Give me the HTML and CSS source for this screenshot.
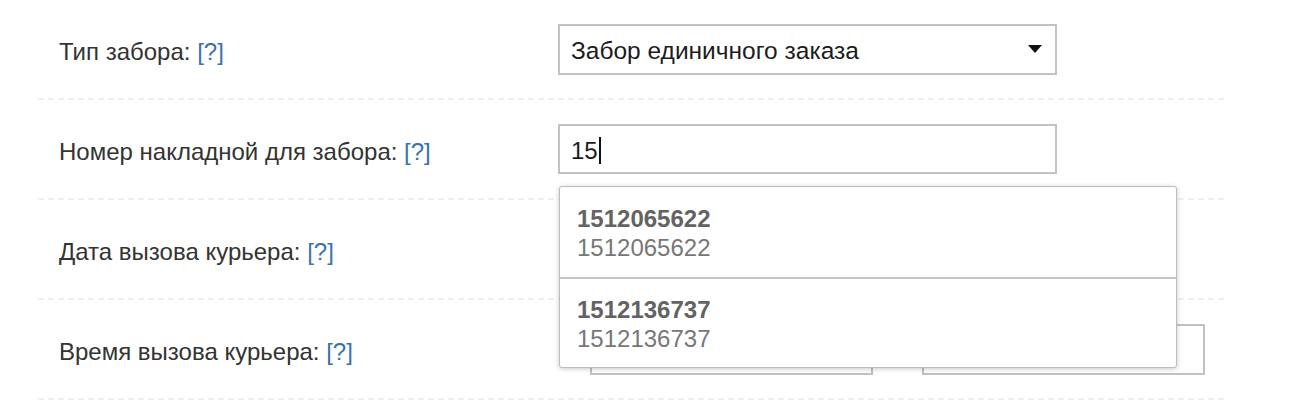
FILE: index.html
```html
<!DOCTYPE html>
<html lang="ru">
<head>
<meta charset="utf-8">
<title>Забор</title>
<link rel="stylesheet" href="styles.css">
</head>
<body>
<div class="form">
  <div class="row">
    <div class="label">Тип забора: <a class="help" href="#">[?]</a></div>
    <div class="field">
      <div class="select"><span class="value">Забор единичного заказа</span><span class="arrow"></span></div>
    </div>
  </div>
  <div class="row">
    <div class="label">Номер накладной для забора: <a class="help" href="#">[?]</a></div>
    <div class="field">
      <div class="input"><span class="value">15</span><span class="caret"></span></div>
      <div class="suggest">
        <div class="item">
          <div class="item-title">1512065622</div>
          <div class="item-sub">1512065622</div>
        </div>
        <div class="item">
          <div class="item-title">1512136737</div>
          <div class="item-sub">1512136737</div>
        </div>
      </div>
    </div>
  </div>
  <div class="row">
    <div class="label">Дата вызова курьера: <a class="help" href="#">[?]</a></div>
    <div class="field"></div>
  </div>
  <div class="row">
    <div class="label">Время вызова курьера: <a class="help" href="#">[?]</a></div>
    <div class="field time">
      <div class="input small"></div>
      <div class="input small"></div>
    </div>
  </div>
</div>
</body>
</html>
```

FILE: styles.css
```css
html, body {
  margin: 0;
  padding: 0;
  background: #fff;
}
body {
  font-family: "Liberation Sans", Arial, sans-serif;
  font-size: 24px;
  color: #333;
}
.form {
  margin-left: 38px;
  width: 1187px;
}
.row {
  display: flex;
  align-items: center;
  height: 100px;
  padding-bottom: 2px;
  box-sizing: border-box;
  background: repeating-linear-gradient(90deg, #efefef 0 6px, transparent 6px 10px) left bottom / 100% 2px no-repeat;
}
.label {
  width: 520px;
  padding-left: 21px;
  padding-top: 6px;
  box-sizing: border-box;
  color: #333;
  white-space: nowrap;
}
.help {
  color: #3a72ad;
  text-decoration: none;
}
.field {
  position: relative;
  display: flex;
  align-items: center;
}
.select, .input {
  box-sizing: border-box;
  width: 499px;
  height: 51px;
  border: 2px solid #c2c2c2;
  background: #fff;
  display: flex;
  align-items: center;
  padding: 0 13px 0 11px;
  color: #1c1c1c;
}
.value {
  padding-top: 4px;
}
.select {
  justify-content: space-between;
  font-size: 24.5px;
}
.arrow {
  width: 0;
  height: 0;
  border-left: 7px solid transparent;
  border-right: 7px solid transparent;
  border-top: 8px solid #111;
}
.input {
  height: 50px;
}
.caret {
  display: inline-block;
  width: 2px;
  height: 27px;
  background: #111;
  margin-left: 1px;
  margin-top: 2px;
}
.time {
  padding-left: 32px;
  gap: 49px;
}
.input.small {
  width: 283px;
  height: 51px;
}
.suggest {
  position: absolute;
  left: 1px;
  top: 62px;
  width: 618px;
  box-sizing: border-box;
  background: #fff;
  border: 1px solid #bdbdbd;
  border-radius: 3px;
  box-shadow: 0 1px 5px rgba(0, 0, 0, 0.22);
  z-index: 5;
}
.item {
  height: 90px;
  box-sizing: border-box;
  padding-left: 17px;
  padding-top: 1px;
  display: flex;
  flex-direction: column;
  justify-content: center;
  line-height: 29px;
}
.item + .item {
  border-top: 2px solid #c6c6c6;
}
.item-title {
  font-weight: bold;
  color: #636363;
}
.item-sub {
  color: #777;
}
```
